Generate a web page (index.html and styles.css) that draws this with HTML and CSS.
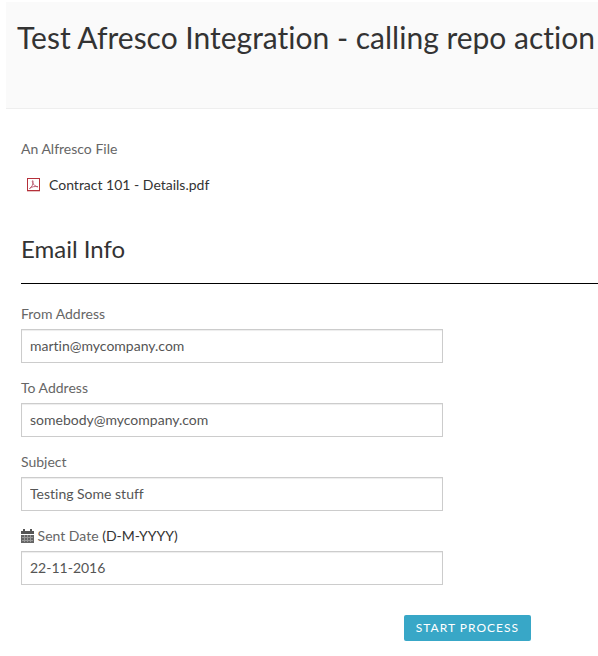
FILE: index.html
```html
<!DOCTYPE html>
<html lang="en">
<head>
    <meta charset="UTF-8">
    <meta name="viewport" content="width=device-width, initial-scale=1.0">
    <title>Start Process</title>
    <link rel="stylesheet" href="styles.css">
</head>
<body>
    <div class="page">
        <header class="page-header">
            <h2>Test Afresco Integration - calling repo action</h2>
        </header>

        <form class="process-form">
            <!-- Attached file -->
            <div class="form-group">
                <span class="field-label">An Alfresco File</span>
                <a class="file-link" href="#">
                    <svg class="pdf-icon" width="14" height="14" viewBox="0 0 14 14" aria-hidden="true">
                        <rect x="0.5" y="0.5" width="12" height="12" fill="#fff" stroke="#b5303a"/>
                        <path d="M0 13.500h13" stroke="#e8c4c4"/>
                        <path d="M2.500 10.500C5 9 6.500 6 6 3C5.800 2 5 3 5.500 4.500C6.500 7 8.500 8.500 11 8.800M2.500 10.500C4.500 8.800 8 8 11 8.800" fill="none" stroke="#b5506a" stroke-width="0.9"/>
                    </svg>
                    <span>Contract 101 - Details.pdf</span>
                </a>
            </div>

            <h3>Email Info</h3>

            <div class="form-group">
                <label for="fromAddress">From Address</label>
                <input type="text" id="fromAddress" name="fromAddress" value="martin@mycompany.com">
            </div>
            <div class="form-group">
                <label for="toAddress">To Address</label>
                <input type="text" id="toAddress" name="toAddress" value="somebody@mycompany.com">
            </div>
            <div class="form-group">
                <label for="subject">Subject</label>
                <input type="text" id="subject" name="subject" value="Testing Some stuff">
            </div>
            <div class="form-group">
                <label for="sentDate">
                    <svg class="calendar-icon" width="13" height="14" viewBox="0 0 13 14" aria-hidden="true">
                        <path d="M0 2h2V0h2v2h5V0h2v2h2v3H0z" fill="#555"/>
                        <path d="M0 6h13v8H0z" fill="#666"/>
                        <path d="M1 8.500h11M1 11.500h11M3.500 6v7M6.500 6v7M9.500 6v7" stroke="#999" stroke-width="1"/>
                    </svg>
                    Sent Date <span class="date-format">(D-M-YYYY)</span>
                </label>
                <input type="text" id="sentDate" name="sentDate" value="22-11-2016">
            </div>

            <div class="form-actions">
                <button type="submit">START PROCESS</button>
            </div>
        </form>
    </div>
</body>
</html>
```

FILE: styles.css
```css
body {
    margin: 0;
    font-family: Lato, sans-serif;
    font-size: 14px;
    line-height: 20px;
    font-variant-ligatures: none;
    color: #333;
    background-color: #fff;
}

.page {
    padding: 2px 0 0 6px;
    overflow-x: hidden;
}

.page-header {
    padding: 18px 0 54px 11px;
    background-color: #fafafa;
    border-bottom: 1px solid #eee;
}

h2, h3 {
    margin: 0;
    font-weight: normal;
}

h2 {
    font-size: 30px;
    line-height: 34px;
    white-space: nowrap;
}

h3 {
    margin: 40px 0 20px;
    padding-bottom: 20px;
    font-size: 24px;
    line-height: 28px;
    border-bottom: 1px solid #000;
}

.process-form {
    padding: 30px 0 15px 15px;
}

.form-group {
    margin-bottom: 15px;
}

label, .field-label {
    display: block;
    margin-bottom: 5px;
    color: #666;
}

.date-format {
    color: #333;
}

.file-link {
    display: flex;
    align-items: center;
    gap: 8px;
    padding: 11px 6px 0;
    color: #333;
    text-decoration: none;
}

.calendar-icon {
    vertical-align: -2px;
}

input[type="text"] {
    display: block;
    width: 100%;
    max-width: 422px;
    height: 34px;
    padding: 5px 8px 7px;
    box-sizing: border-box;
    font: inherit;
    font-variant-ligatures: none;
    color: #555;
    background-color: #fff;
    border: 1px solid #ccc;
    border-radius: 0;
    box-shadow: inset 0 1px 1px rgba(0, 0, 0, 0.075);
}

.form-actions {
    display: flex;
    justify-content: flex-end;
    max-width: 510px;
    padding-top: 15px;
}

button {
    padding: 4px 12px;
    font-family: inherit;
    font-size: 12px;
    line-height: 18px;
    letter-spacing: 1px;
    color: #fff;
    background-color: #38a7c7;
    border: none;
    border-radius: 2px;
    cursor: pointer;
}
```
